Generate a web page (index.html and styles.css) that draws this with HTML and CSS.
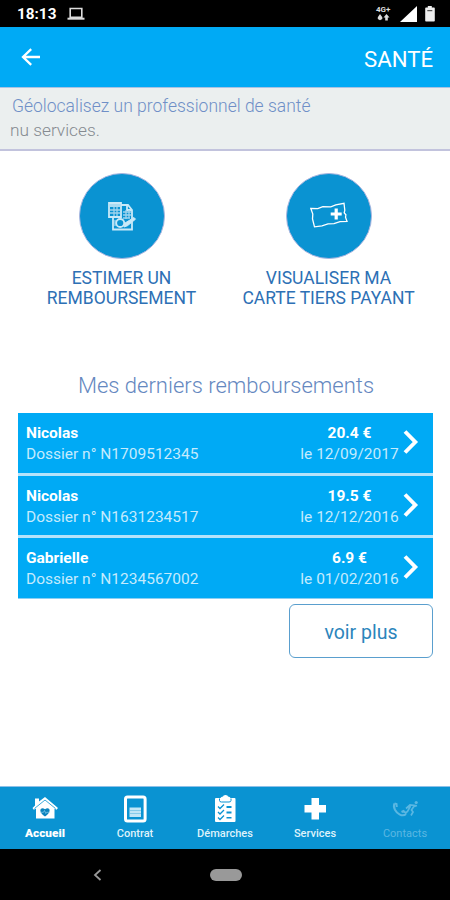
FILE: index.html
```html
<!DOCTYPE html>
<html lang="fr">
  <head>
    <meta charset="utf-8">
    <title>Santé</title>
    <link rel="stylesheet" href="styles.css">
  </head>
  <body>
    <div id="statusBar">
      <span class="clock">18:13</span>
      <svg class="laptop" width="18" height="14" viewBox="0 0 18 14"><path d="M3.2 1.5h11.6v8.7H3.2z" fill="none" stroke="#ddd" stroke-width="1.6"/><path d="M0.5 10.7h17v2h-17z" fill="#ddd"/></svg>
      <span class="network">
        <span>4G+</span>
        <svg width="14" height="7" viewBox="0 0 14 7"><path d="M4 0L6.3 3.2V5L4 6.3 1.8 5V3.2zM10.5 0l3 3.5h-1.7V6.5H9.2V3.5H7.5z" fill="#ddd"/></svg>
      </span>
      <svg class="signal" width="17" height="16" viewBox="0 0 17 16"><path d="M0 16L17 0v16z" fill="#fff"/></svg>
      <svg class="battery" width="10" height="16" viewBox="0 0 10 16"><path d="M2.8 0h4v1.6H9q.8 0 .8.8v12.4q0 .8-.8.8H1q-.8 0-.8-.8V2.4q0-.8.8-.8h1.8z" fill="#eee"/><path d="M2.3 4.7h5" stroke="#333" stroke-width="1"/></svg>
    </div>
    <div id="header">
      <svg width="20" height="18" viewBox="0 0 20 18"><path d="M19 9H2.2M10.2 1.2L2 9l8.2 7.8" fill="none" stroke="#fff" stroke-width="2.3"/></svg>
      <h1>SANTÉ</h1>
    </div>
    <div id="banner">
      <a class="geoloc" href="#">Géolocalisez un professionnel de santé</a>
      <span class="services">nu services.</span>
    </div>

    <div id="mainContent">
      <div id="actions">
        <a class="action" href="#">
          <span class="round">
            <svg width="30" height="30" viewBox="0 0 30 30">
              <path d="M2 2h12v14H2zM14 4h7l4 5v9M20 4v5h5M6 16v12.500h19V20" fill="none" stroke="#c9e9f8" stroke-width="1.8"/>
              <path d="M3 3h10v3H3z" fill="#a9dbf2"/>
              <path d="M3 9h10M3 12h10M7 6v9M10 6v9M16 11h8M16 14h8M16 17h7M19 9v9M22 9v8" stroke="#9fd4ee" stroke-width="1.3"/>
              <circle cx="13.2" cy="22" r="4" fill="none" stroke="#c9e9f8" stroke-width="1.8"/>
              <path d="M8 19v6M17 26l1-4 9-5.500 1.500 1.700-8 6.500z" fill="#c9e9f8" stroke="#c9e9f8"/>
            </svg>
          </span>
          <span>ESTIMER UN</span>
          <span>REMBOURSEMENT</span>
        </a>
        <a class="action" href="#">
          <span class="round">
            <svg width="40" height="30" viewBox="0 0 40 30">
              <path d="M1.800 7.500l7 .2 5-2 8 .2 5-2 8.200-1.600.8 7-.6 2.500 1.700 2-.4 2.500 1.500 4-7 .4-6 2-6 .2-6 2-7.500 1L3.500 18l.3-5z" fill="none" stroke="#fff" stroke-width="1.3"/>
              <path d="M27.200 7.500v11M21.700 13h11" stroke="#fff" stroke-width="3.200"/>
            </svg>
          </span>
          <span>VISUALISER MA</span>
          <span>CARTE TIERS PAYANT</span>
        </a>
      </div>

      <h2>Mes derniers remboursements</h2>
      <div id="refunds">
        <a class="refund" href="#">
          <span class="who"><b>Nicolas</b><span>Dossier n° N1709512345</span></span>
          <span class="amount"><b>20.4 €</b><span>le 12/09/2017</span></span>
          <svg width="16" height="26" viewBox="0 0 16 26"><path d="M2 2.500L12.300 13 2 23.500" fill="none" stroke="#fff" stroke-width="3.900"/></svg>
        </a>
        <a class="refund" href="#">
          <span class="who"><b>Nicolas</b><span>Dossier n° N1631234517</span></span>
          <span class="amount"><b>19.5 €</b><span>le 12/12/2016</span></span>
          <svg width="16" height="26" viewBox="0 0 16 26"><path d="M2 2.500L12.300 13 2 23.500" fill="none" stroke="#fff" stroke-width="3.900"/></svg>
        </a>
        <a class="refund" href="#">
          <span class="who"><b>Gabrielle</b><span>Dossier n° N1234567002</span></span>
          <span class="amount"><b>6.9 €</b><span>le 01/02/2016</span></span>
          <svg width="16" height="26" viewBox="0 0 16 26"><path d="M2 2.500L12.300 13 2 23.500" fill="none" stroke="#fff" stroke-width="3.900"/></svg>
        </a>
      </div>
      <a class="btn-more" href="#">voir plus</a>
    </div>

    <div id="tabs">
      <a class="tab current" href="#">
        <svg width="28" height="28" viewBox="0 0 28 28">
          <path d="M4 3.500h4v3L14 2l13 11-1.500 1.700-2-1.200V23.500H5V13.500l-2.200 1.200L1.500 13 4 10.500z" fill="#fff"/>
          <path d="M3.500 13.500L14 5l10.500 8.500" fill="none" stroke="#0a93d2" stroke-width=".8"/>
          <path d="M14 21.500c-8-5.500-4-10.500 0-7.200 4-3.300 8 1.700 0 7.200z" fill="#0a83bd"/>
          <path d="M9.500 17.300h3l1-1.800 1.300 3 .8-1.200h3" fill="none" stroke="#7cc6e8" stroke-width=".8"/>
        </svg>
        <span>Accueil</span>
      </a>
      <a class="tab" href="#">
        <svg width="28" height="28" viewBox="0 0 28 28">
          <rect x="4.500" y="2" width="19.600" height="24" rx="2" fill="none" stroke="#fff" stroke-width="3"/>
          <path d="M8.500 12.500h11.500v9.500H8.500z" fill="#c3e6f6"/>
          <path d="M8.500 15.500h11.500M8.500 18.500h11.500" stroke="#6fbfe4" stroke-width=".7"/>
        </svg>
        <span>Contrat</span>
      </a>
      <a class="tab" href="#">
        <svg width="28" height="28" viewBox="0 0 28 28">
          <path d="M5 3h4.500q.5-1.500 2.500-1.500 0-1.500 2.500-1.500t2.500 1.500q2 0 2.500 1.500h4q1 0 1 1v22q0 1-1 1H5q-1 0-1-1V4q0-1 1-1z" fill="#fff"/>
          <path d="M8.500 3.500v2q0 1.500 2 1.500h7.500q2 0 2-1.500v-2" fill="none" stroke="#0a93d2"/>
          <path d="M7 11.500l2 2 4-4M7 17l2 2 4-4M7 22.500l2 2 4-4" fill="none" stroke="#0a93d2" stroke-width="1.300"/>
          <path d="M15.500 11h5v2h-5zM15.500 16.500h5v2h-5zM15.500 22h5v1.500h-5z" fill="#0a93d2"/>
        </svg>
        <span>Démarches</span>
      </a>
      <a class="tab" href="#">
        <svg width="28" height="28" viewBox="0 0 28 28"><path d="M10.500 3h7.500v7h7v7.500h-7v7h-7.500v-7h-7V10h7z" fill="#fff"/></svg>
        <span>Services</span>
      </a>
      <a class="tab off" href="#">
        <svg width="28" height="28" viewBox="0 0 28 28">
          <path d="M3.500 8.500c-2 4 1.500 9 5 10.800 2.500 1.400 5 1.200 6.500-.3M3.500 8.500l2 .5.3 3M10.500 17l2-1 2.800 2.500" fill="none" stroke="#5ab7e2" stroke-width="2"/>
          <path d="M15 13.500l4-3.500 4.500.5-3 4.500 1.500 2-2 3.500M19.500 11l-3 5.500-2 1.500M23 11.500l3-1" fill="none" stroke="#5ab7e2" stroke-width="1.700"/>
          <circle cx="25.200" cy="7.500" r="1.600" fill="#5ab7e2"/>
        </svg>
        <span>Contacts</span>
      </a>
    </div>
    <div id="systemBar">
      <svg width="9" height="12" viewBox="0 0 9 12"><path d="M7.500 1L2 6l5.500 5" fill="none" stroke="#999" stroke-width="1.800"/></svg>
      <span class="home"></span>
    </div>
  </body>
</html>
```
FILE: styles.css
```css
* { box-sizing: border-box; }
body { margin: 0px; width: 450px; height: 900px; display: flex; flex-direction: column; overflow: hidden; font-family: Roboto, Arial, sans-serif; background: #fff; }
a { text-decoration: none; color: inherit; }
h1, h2 { margin: 0px; font-weight: normal; }
svg { display: block; flex: none; }

#statusBar { height: 27px; flex: none; display: flex; align-items: center; padding: 0 15px 0 17px; background: #000; color: #fff; }
.clock { width: 39px; font-size: 15.300px; line-height: 27px; font-weight: bold; padding-top: 2px; }
.laptop { margin-left: 11px; }
.network { margin-left: auto; width: 16px; font-size: 8px; line-height: 8px; font-weight: bold; color: #ddd; }
.network span { display: block; height: 8px; }
.signal { margin-left: 8px; }
.battery { margin-left: 8px; }

#header { height: 60px; flex: none; display: flex; align-items: center; justify-content: space-between; padding: 0 17px 0 21px; background: #00aaf5; color: #fff; }
#header h1 { font-size: 22.200px; line-height: 28px; padding-top: 3px; }

#banner { height: 64px; flex: none; background: #ebefef; border-top: 1px solid #a9c3e3; border-bottom: 2px solid #c2c3dd; padding: 6px 10px 0; font-size: 17.500px; line-height: 24px; white-space: nowrap; font-weight: 300; }
#banner a, #banner span { display: block; }
.geoloc { color: #6f8fc7; padding-left: 2px; }
.services { color: #858a90; font-size: 17.300px; }

#mainContent { flex: 1; padding: 22px 17px 0 18px; display: flex; flex-direction: column; }
#actions { display: flex; height: 201px; }
.action { width: 207px; display: flex; flex-direction: column; align-items: center; color: #2d70b5; font-size: 17.500px; line-height: 20px; white-space: nowrap; }
.round { width: 86px; height: 86px; margin-bottom: 9px; border-radius: 50%; border: 1px solid #a9b5df; background: #0a93d2; display: flex; align-items: center; justify-content: center; }
#mainContent h2 { height: 39px; text-align: center; font-size: 22px; line-height: 24px; font-weight: 300; color: #6588bf; white-space: nowrap; padding-left: 1px; }
#refunds { display: grid; gap: 3px; background: #b5e3fa; border-bottom: 1px solid #8acff3; }
.refund { height: 59.500px; padding: 10px 14px 0 8px; display: flex; background: #00aaf5; color: #fff; font-size: 15.500px; line-height: 21px; white-space: nowrap; }
.refund b, .refund span span { display: block; }
.refund span span { color: #c5ebfd; }
.who { flex: 1; }
.amount { width: 99px; text-align: center; }
.refund svg { margin: 6px 0 0 4px; }
.btn-more { align-self: flex-end; width: 144px; height: 54px; margin-top: 5px; border: 1px solid #5a9fce; border-radius: 6px; font-size: 19.500px; line-height: 55px; text-align: center; color: #2c85bc; }

#tabs { height: 63px; flex: none; display: flex; background: #0a93d2; border-top: 1px solid #8dc0e8; }
.tab { flex: 1; display: flex; flex-direction: column; align-items: center; padding-top: 8px; color: #def2fb; font-size: 11px; line-height: 14px; font-weight: 500; }
.tab span { margin-top: 4px; }
.current { color: #fff; font-size: 11.800px; font-weight: 900; }
.current span { margin-top: 3px; }
.off { color: #5ab7e2; font-weight: normal; }
#systemBar { height: 51px; flex: none; display: flex; align-items: center; padding-left: 93px; background: #000; }
.home { width: 32px; height: 12px; margin-left: 108px; border-radius: 6px; background: #999; }
```
